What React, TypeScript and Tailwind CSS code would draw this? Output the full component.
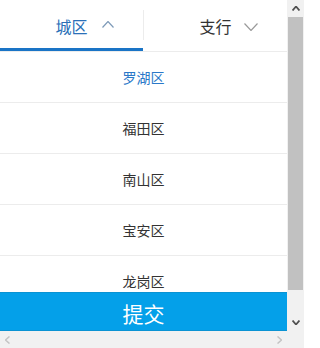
import React from "react";

const font = { fontFamily: '"Noto Sans CJK SC", "Noto Sans", sans-serif' };

function Chevron({ dir, color, w = 12, h = 7, sw = 1.2 }: { dir: "up" | "down" | "left" | "right"; color: string; w?: number; h?: number; sw?: number }) {
  let pts = "";
  if (dir === "up") pts = `0.5,${h - 0.5} ${w / 2},0.5 ${w - 0.5},${h - 0.5}`;
  if (dir === "down") pts = `0.5,0.5 ${w / 2},${h - 0.5} ${w - 0.5},0.5`;
  if (dir === "left") pts = `${w - 0.5},0.5 0.5,${h / 2} ${w - 0.5},${h - 0.5}`;
  if (dir === "right") pts = `0.5,0.5 ${w - 0.5},${h / 2} 0.5,${h - 0.5}`;
  return (
    <svg width={w} height={h} viewBox={`0 0 ${w} ${h}`} className="block">
      <polyline points={pts} fill="none" stroke={color} strokeWidth={sw} />
    </svg>
  );
}

const rows = ["罗湖区", "福田区", "南山区", "宝安区", "龙岗区"];

export default function App() {
  return (
    <div className="w-[304px] h-[348px] flex flex-col bg-white overflow-hidden" style={font}>
      <div className="flex h-[331px]">
        <div className="w-[287px] flex flex-col">
          <div className="h-[52px] flex border-b border-[#ececec]">
            <div className="w-[143px] flex items-center justify-center border-b-[3px] border-[#1a74c6] pt-[3px]">
              <span className="w-[26px]" />
              <span className="text-[16px] leading-none text-[#2a70b8]">城区</span>
              <span className="w-[26px] flex justify-end pb-[2px]">
                <Chevron dir="up" color="#7d9ab8" />
              </span>
            </div>
            <div className="w-px self-center h-[30px] bg-[#ececec] mt-[-2px]" />
            <div className="flex-1 flex items-center justify-center">
              <span className="w-[26px]" />
              <span className="text-[16px] leading-none text-[#333]">支行</span>
              <span className="w-[26px] flex justify-end pt-[3px]">
                <Chevron dir="down" color="#9a9a9a" w={14} h={8} />
              </span>
            </div>
          </div>
          <div className="h-[240px] overflow-hidden">
            {rows.map((r, i) => (
              <div
                key={r}
                className={`h-[51px] flex items-center justify-center border-b border-[#ececec] text-[14px] ${i === 0 ? "text-[#2a78c8]" : "text-[#333]"}`}
              >
                {r}
              </div>
            ))}
          </div>
          <div className="h-[39px] bg-[#04a0e9] flex items-center justify-center pt-[4px] text-white text-[21px] leading-none border-y border-[#0a93d3]">
            提交
          </div>
        </div>
        <div className="w-[17px] bg-[#f1f1f1] flex flex-col">
          <div className="h-[17px] flex items-center justify-center">
            <Chevron dir="up" color="#505050" w={8} h={5} sw={1.8} />
          </div>
          <div className="flex-1 flex flex-col">
            <div className="h-[273px] mx-[1px] bg-[#c1c1c1]" />
          </div>
          <div className="h-[17px] flex items-center justify-center">
            <Chevron dir="down" color="#505050" w={8} h={5} sw={1.8} />
          </div>
        </div>
      </div>
      <div className="h-[17px] flex bg-[#f1f1f1]">
        <div className="w-[287px] flex items-center justify-between px-[5px]">
          <Chevron dir="left" color="#c4c4c4" w={5} h={8} sw={1.5} />
          <Chevron dir="right" color="#c4c4c4" w={5} h={8} sw={1.5} />
        </div>
        <div className="w-[17px] bg-[#f1f1f1]" />
      </div>
    </div>
  );
}
